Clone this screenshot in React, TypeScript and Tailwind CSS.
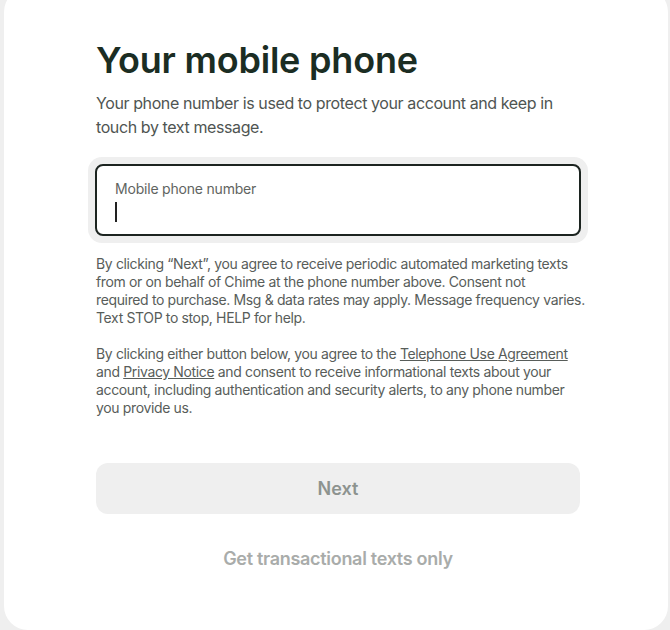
export default function App() {
  return (
    <div className="min-h-screen bg-[#efefef] pl-[4px] pr-[2px] font-['Inter',sans-serif]">
      <div className="mt-[-12px] min-h-[642px] rounded-[24px] bg-white pl-[92px] pr-[88px] pt-[50px]">
        <h1 className="text-[36px] font-semibold leading-[44px] tracking-[-0.2px] text-[#1b2d23]">
          Your mobile phone
        </h1>
        <p className="mt-[9px] text-[16px] leading-[24px] tracking-[-0.4px] text-[#4f5552]">
          Your phone number is used to protect your account and keep in touch by text message.
        </p>

        <div className="mt-[18px] -mx-[8px] rounded-[14px] bg-[#efefef] p-[7px]">
          <label className="flex h-[72px] flex-col rounded-[8px] border-2 border-[#1c2420] bg-white px-[18px] pt-[14px]">
            <span className="text-[14px] leading-[18px] tracking-[-0.2px] text-[#5f6461]">Mobile phone number</span>
            <span className="mt-[4px] h-[20px] w-[1.5px] bg-[#222]" />
          </label>
        </div>

        <div className="mt-[12px] mr-[-16px] text-[14px] leading-[18px] tracking-[-0.36px] text-[#585d5a]">
          <p>
            By clicking “Next”, you agree to receive periodic automated marketing texts
            <br />
            from or on behalf of Chime at the phone number above. Consent not
            <br />
            required to purchase. Msg &amp; data rates may apply. Message frequency varies.
            <br />
            Text STOP to stop, HELP for help.
          </p>
          <p className="mt-[18px]">
            By clicking either button below, you agree to the <a className="underline">Telephone Use Agreement</a>
            <br />
            and <a className="underline">Privacy Notice</a> and consent to receive informational texts about your
            <br />
            account, including authentication and security alerts, to any phone number
            <br />
            you provide us.
          </p>
        </div>

        <button
          disabled
          className="mt-[46px] flex h-[51px] w-full items-center justify-center rounded-[12px] bg-[#efefef] text-[18px] font-semibold text-[#8d938f]"
        >
          Next
        </button>
        <button className="mt-[20px] flex h-[48px] w-full items-center justify-center text-[18px] font-semibold tracking-[-0.3px] text-[#a9acaa]">
          Get transactional texts only
        </button>
      </div>
    </div>
  );
}
